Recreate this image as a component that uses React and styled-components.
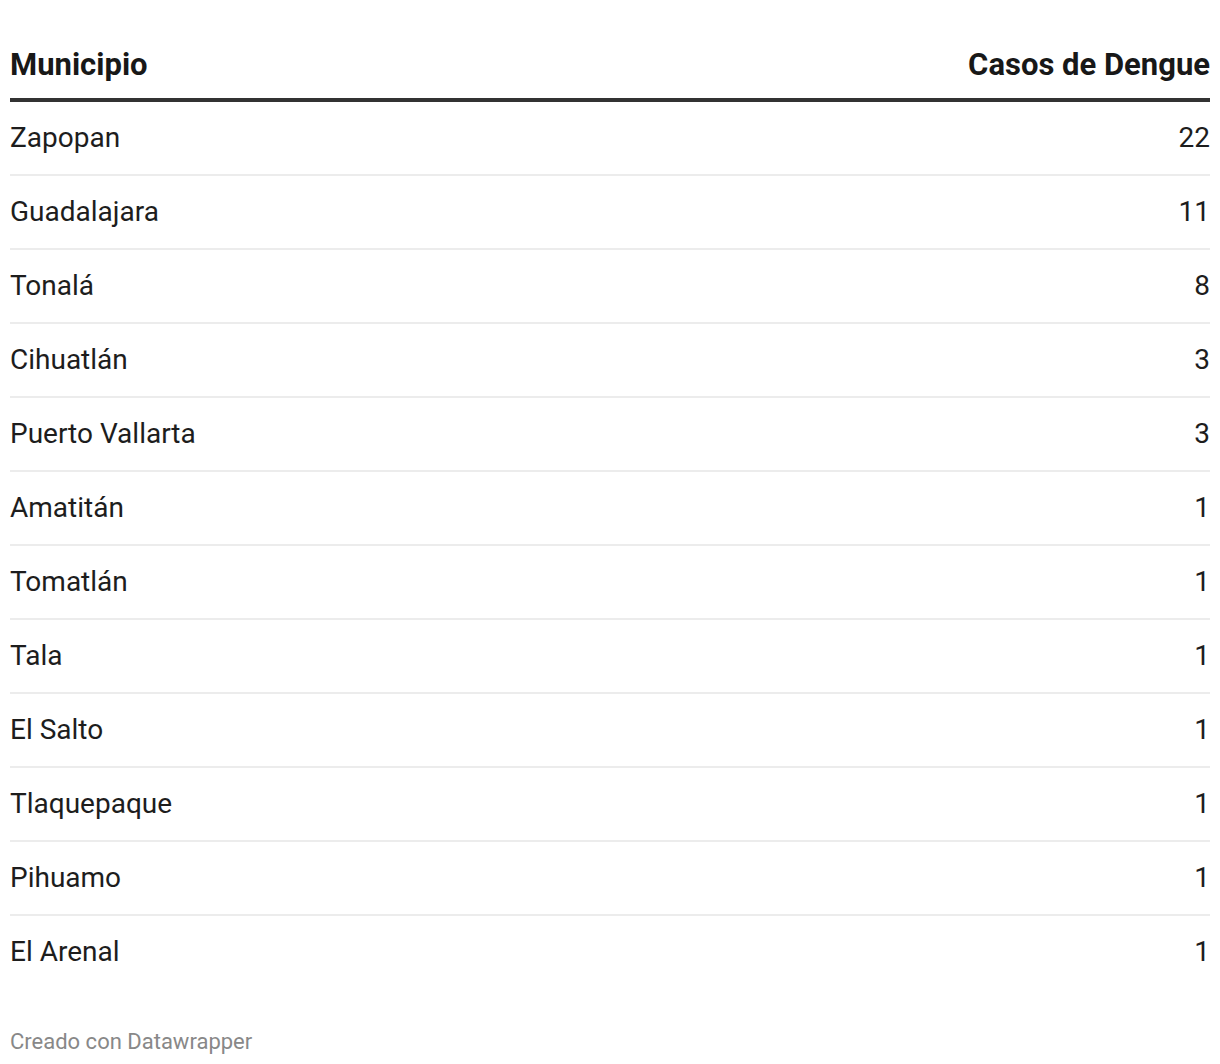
import React from 'react';
import styled, { createGlobalStyle } from 'styled-components';

const GlobalStyle = createGlobalStyle`
  body {
    margin: 0;
    background: #ffffff;
    font-family: Roboto, "Liberation Sans", sans-serif;
    color: #1d1d1d;
  }
`;

const Wrapper = styled.div`
  padding: 28px 10px 0 10px;
  width: 1200px;
`;

const HeaderRow = styled.div`
  display: flex;
  justify-content: space-between;
  align-items: center;
  box-sizing: border-box;
  height: 74px;
  padding-top: 4px;
  border-bottom: 4px solid #333333;
`;

const HeaderCell = styled.div`
  font-size: 31px;
  line-height: 36px;
  font-weight: 700;
  color: #181818;
`;

const Row = styled.div`
  display: flex;
  justify-content: space-between;
  align-items: center;
  height: 72px;
  border-bottom: 2px solid ${(p) => (p.$last ? 'transparent' : '#ececec')};
`;

const Cell = styled.div`
  font-size: 28px;
  line-height: 34px;
  color: #1d1d1d;
`;

const Footer = styled.div`
  margin-top: 39px;
  font-size: 22px;
  line-height: 26px;
  color: #888888;
`;

const data = [
  ['Zapopan', 22],
  ['Guadalajara', 11],
  ['Tonalá', 8],
  ['Cihuatlán', 3],
  ['Puerto Vallarta', 3],
  ['Amatitán', 1],
  ['Tomatlán', 1],
  ['Tala', 1],
  ['El Salto', 1],
  ['Tlaquepaque', 1],
  ['Pihuamo', 1],
  ['El Arenal', 1],
];

export default function App() {
  return (
    <>
      <GlobalStyle />
      <Wrapper>
        <HeaderRow>
          <HeaderCell>Municipio</HeaderCell>
          <HeaderCell>Casos de Dengue</HeaderCell>
        </HeaderRow>
        {data.map(([name, n], i) => (
          <Row key={name} $last={i === data.length - 1}>
            <Cell>{name}</Cell>
            <Cell>{n}</Cell>
          </Row>
        ))}
        <Footer>Creado con Datawrapper</Footer>
      </Wrapper>
    </>
  );
}
